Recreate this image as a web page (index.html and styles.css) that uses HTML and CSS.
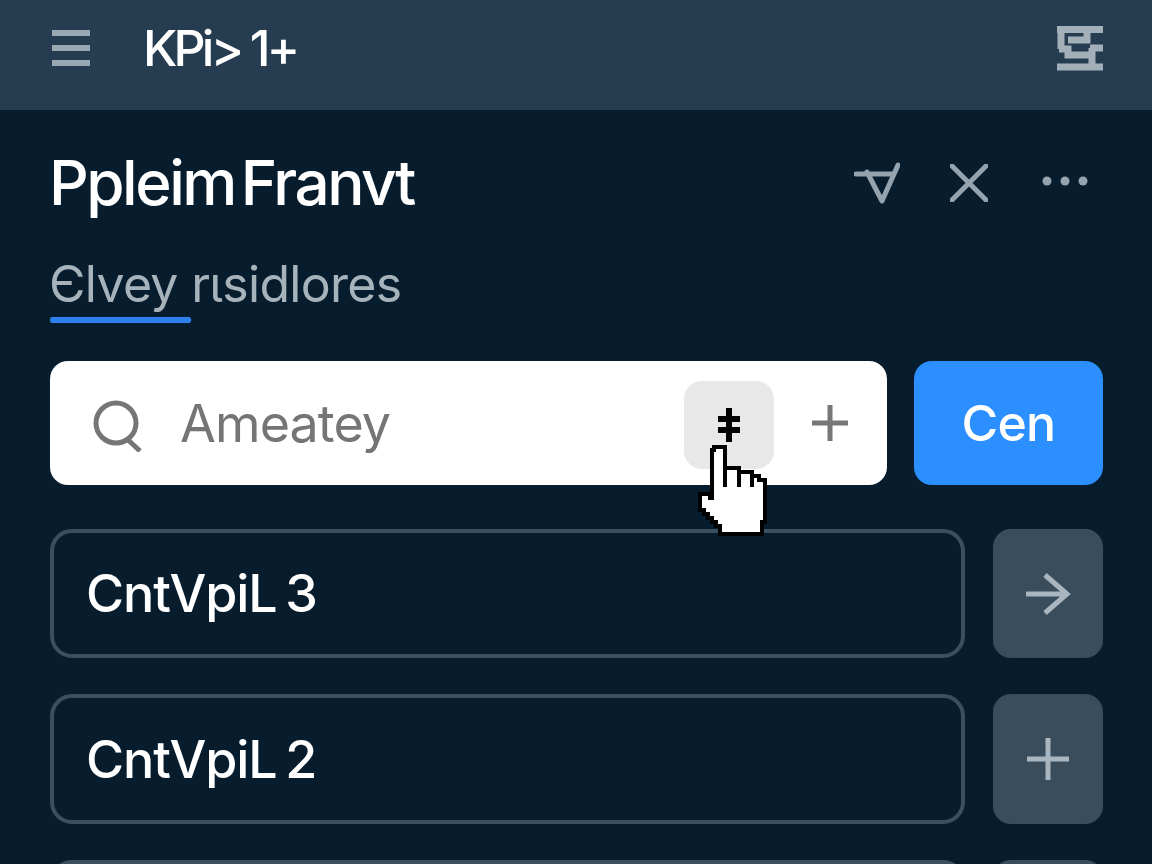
FILE: index.html
```html
<!DOCTYPE html>
<html lang="en">
<head>
<meta charset="utf-8">
<title>KPi&gt; 1+</title>
<link rel="stylesheet" href="styles.css">
</head>
<body>
<div class="app">
  <header class="topbar">
    <div class="topbar-left">
      <svg class="menu-icon" width="38" height="36" viewBox="0 0 38 36"><path d="M0 3H38M0 18H38M0 33H38"/></svg>
      <span class="brand">KPi&gt; 1+</span>
    </div>
    <svg class="logo-icon" width="46" height="45" viewBox="0 0 46 45"><path d="M0 3.5H46M4 0V23M2 23H11V29H35M11 14H33M30 3V17M35 22V40M33 22H46M0 41H46"/></svg>
  </header>
  <main class="content">
    <section class="title-row">
      <h1 class="title">Ppleim Franvt</h1>
      <div class="title-actions">
        <svg class="tool" width="46" height="42" viewBox="0 0 46 42"><path d="M2 12H38M13 10L28 39L44 3"/></svg>
        <svg class="tool" width="38" height="38" viewBox="0 0 38 38"><path d="M2 2L36 36M36 2L2 36"/></svg>
        <svg class="dots" width="46" height="10" viewBox="0 0 46 10"><circle cx="5" cy="5" r="4.5"/><circle cx="23" cy="5" r="4.5"/><circle cx="41" cy="5" r="4.5"/></svg>
      </div>
    </section>
    <div class="tab-block">
      <div class="tab-label">Єlvey rιsidlores</div>
      <div class="tab-line"></div>
    </div>
    <section class="search-row">
      <div class="search">
        <svg class="search-icon" width="50" height="52" viewBox="0 0 50 52"><circle cx="23" cy="23" r="20"/><path d="M33 38L47 51"/></svg>
        <span class="placeholder">Ameatey</span>
        <div class="chip"><svg class="chip-icon" width="24" height="34" viewBox="0 0 24 34"><path d="M12 0V34M1 11H23M1 22H23"/></svg></div>
        <svg class="search-plus" width="36" height="36" viewBox="0 0 36 36"><path d="M18 0V36M0 18H36"/></svg>
      </div>
      <button class="primary">Cen</button>
    </section>
    <section class="row">
      <div class="row-box">CntVpiL 3</div>
      <div class="row-action"><svg class="action-icon" width="46" height="44" viewBox="0 0 46 44"><path d="M1 22H42M20 3L42 22L20 41"/></svg></div>
    </section>
    <section class="row tall">
      <div class="row-box">CntVpiL 2</div>
      <div class="row-action"><svg class="action-icon" width="42" height="42" viewBox="0 0 42 42"><path d="M21 0V42M0 21H42"/></svg></div>
    </section>
    <section class="row">
      <div class="row-box"></div>
      <div class="row-action"></div>
    </section>
  </main>
  <svg class="cursor" width="76" height="100" viewBox="0 0 76 100" shape-rendering="crispEdges">
    <path class="hand" d="M18 5H29V26H43V30H56V34H63V38H69V80H66V92H24V84H20V80H16V76H12V72H8V68H4V52H14V56H16V8H18Z"/>
    <path class="creases" d="M29 26V45M43 30V45M56 34V45"/>
  </svg>
</div>
</body>
</html>
```
FILE: styles.css
```css
* {
  box-sizing: border-box;
}

html,
body {
  margin: 0;
  height: 100%;
  overflow: hidden;
}

body {
  background: #071d2e;
  font-family: Inter, "Noto Sans", sans-serif;
}

.app {
  position: relative;
  width: 1152px;
  height: 864px;
  overflow: hidden;
  background: #071d2e;
}

.topbar {
  height: 110px;
  padding: 0 49px 14px 52px;
  display: flex;
  align-items: center;
  justify-content: space-between;
  background: #263c50;
}

.topbar-left {
  display: flex;
  align-items: center;
  gap: 53px;
}

.menu-icon path {
  fill: none;
  stroke: #9aa8b3;
  stroke-width: 6;
}

.brand {
  color: #fff;
  font-size: 50px;
  font-weight: 500;
  line-height: 1;
  letter-spacing: -3.8px;
  white-space: nowrap;
}

.logo-icon path {
  fill: none;
  stroke: #a3b0ba;
  stroke-width: 7;
}

.content {
  padding: 0 49px 0 50px;
}

.title-row {
  height: 108px;
  padding-top: 38px;
  display: flex;
  align-items: center;
  justify-content: space-between;
}

.title {
  margin: 0 0 0 -1px;
  color: #fff;
  font-size: 62px;
  font-weight: 500;
  line-height: 1;
  letter-spacing: -2.5px;
  word-spacing: -8px;
  white-space: nowrap;
}

.title-actions {
  display: flex;
  align-items: center;
  gap: 50px;
  padding-right: 15px;
}

.tool path {
  fill: none;
  stroke: #94a3ad;
  stroke-width: 5;
  stroke-linecap: round;
  stroke-linejoin: round;
}

.dots {
  margin-left: 4px;
  margin-top: -4px;
  fill: #94a3ad;
}

.tab-block {
  margin-top: 38px;
  width: 350px;
}

.tab-label {
  margin-left: -1px;
  color: #a7b3bb;
  font-size: 50px;
  line-height: 56px;
  letter-spacing: -0.7px;
  white-space: nowrap;
}

.tab-line {
  width: 141px;
  height: 6px;
  margin-top: 5px;
  border-radius: 2px;
  background: #2f80ed;
}

.search-row {
  margin-top: 38px;
  display: flex;
  gap: 27px;
}

.search {
  flex: 1;
  height: 124px;
  padding: 0 39px 0 43px;
  display: flex;
  align-items: center;
  border-radius: 18px;
  background: #fff;
}

.search-icon {
  flex: none;
  margin-top: 5px;
}

.search-icon circle,
.search-icon path {
  fill: none;
  stroke: #757575;
  stroke-width: 5;
}

.placeholder {
  flex: 1;
  margin-left: 37px;
  color: #757575;
  font-size: 52px;
  letter-spacing: -0.9px;
}

.chip {
  width: 90px;
  height: 88px;
  margin-top: 4px;
  display: flex;
  align-items: center;
  justify-content: center;
  border-radius: 18px;
  background: #e8e8e8;
}

.chip-icon path {
  fill: none;
  stroke: #000;
  stroke-width: 6;
}

.search-plus {
  margin-left: 38px;
}

.search-plus path {
  fill: none;
  stroke: #777;
  stroke-width: 5;
}

.primary {
  width: 189px;
  height: 124px;
  padding: 0;
  border: 0;
  border-radius: 18px;
  background: #2b8fff;
  color: #fff;
  font-family: inherit;
  font-size: 50px;
  font-weight: 500;
  letter-spacing: -0.7px;
}

.row {
  margin-top: 44px;
  height: 129px;
  display: flex;
  gap: 28px;
}

.row.tall {
  margin-top: 36px;
  height: 130px;
}

.row.tall + .row {
  margin-top: 36px;
}

.row-box {
  flex: 1;
  padding-left: 32px;
  display: flex;
  align-items: center;
  border: 4px solid #3a5060;
  border-radius: 22px;
  color: #fff;
  font-size: 52px;
  font-weight: 500;
  letter-spacing: -1.1px;
  word-spacing: -4px;
}

.row-action {
  width: 110px;
  display: flex;
  align-items: center;
  justify-content: center;
  border-radius: 18px;
  background: #394d5c;
}

.action-icon path {
  fill: none;
  stroke: #a9b6bf;
  stroke-width: 5;
}

.cursor {
  position: absolute;
  left: 696px;
  top: 442px;
}

.hand {
  fill: #fff;
  stroke: #000;
  stroke-width: 4;
}

.creases {
  fill: none;
  stroke: #000;
  stroke-width: 4;
}
```
